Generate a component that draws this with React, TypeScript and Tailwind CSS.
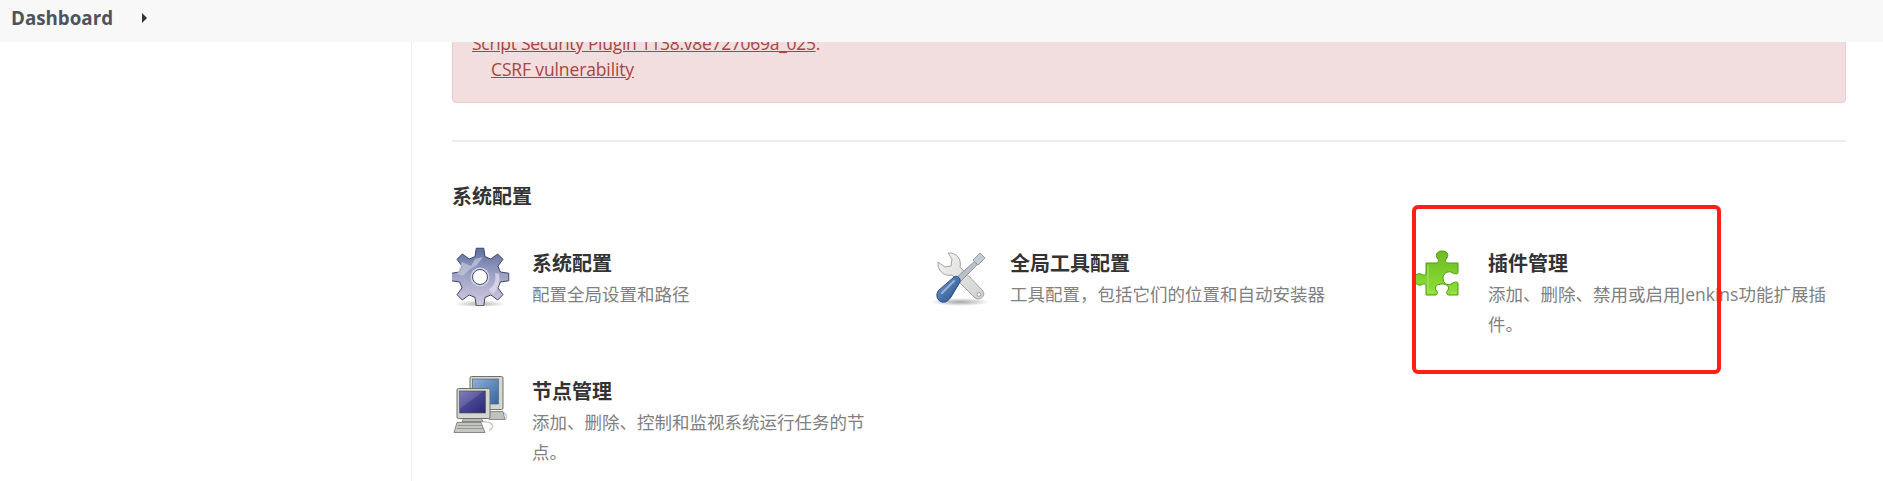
const cjk = "font-['Open_Sans','Noto_Sans_CJK_SC',sans-serif]";

// 8-tooth gear outline, tooth pointing up
function gearPath(cx: number, cy: number, outer: number, root: number) {
  const pts: string[] = [];
  for (let i = 0; i < 8; i++) {
    const a = (i * Math.PI) / 4 - Math.PI / 2;
    const at = (r: number, d: number) =>
      `${(cx + r * Math.cos(a + d)).toFixed(2)} ${(cy + r * Math.sin(a + d)).toFixed(2)}`;
    pts.push(at(root, -0.24), at(outer, -0.13), at(outer, 0.13), at(root, 0.24));
  }
  return 'M' + pts.join('L') + 'Z';
}

function GearIcon() {
  return (
    <svg viewBox="7 6 60 60" className="w-[60px] h-[60px] shrink-0">
      <defs>
        <linearGradient id="gear" x1="0" y1="0" x2="0" y2="1">
          <stop offset="0" stopColor="#5f6f9f" />
          <stop offset="0.45" stopColor="#9aa0c4" />
          <stop offset="1" stopColor="#d4cbe2" />
        </linearGradient>
        <radialGradient id="gearShadow">
          <stop offset="0" stopColor="#000" stopOpacity="0.3" />
          <stop offset="1" stopColor="#000" stopOpacity="0" />
        </radialGradient>
      </defs>
      <ellipse cx="35" cy="64" rx="26" ry="4" fill="url(#gearShadow)" />
      <path d={gearPath(35, 37, 29, 21)} fill="url(#gear)" stroke="#3f4763" strokeWidth="1" strokeLinejoin="round" />
      <path d="M12 34L17 22L26 26L30 19L38 17L32 25L24 30L18 36Z" fill="#c3c9dc" opacity="0.7" />
      <path d="M48 54A20 20 0 0 0 54 34L50 33A17 17 0 0 1 44 50Z" fill="#e4dfee" opacity="0.7" />
      <circle cx="35" cy="37" r="9.5" fill="#cfd2e2" />
      <circle cx="35" cy="37" r="7.5" fill="#fff" stroke="#454c68" strokeWidth="1" />
    </svg>
  );
}

function ToolsIcon() {
  return (
    <svg viewBox="5 6 60 60" className="w-[60px] h-[60px] shrink-0">
      <defs>
        <linearGradient id="blade" x1="0" y1="0" x2="1" y2="1">
          <stop offset="0" stopColor="#f4f4f2" />
          <stop offset="1" stopColor="#cfd1cd" />
        </linearGradient>
        <linearGradient id="handle" x1="0" y1="0" x2="1" y2="1">
          <stop offset="0" stopColor="#79a0cf" />
          <stop offset="1" stopColor="#204a87" />
        </linearGradient>
        <radialGradient id="toolShadow">
          <stop offset="0" stopColor="#000" stopOpacity="0.35" />
          <stop offset="1" stopColor="#000" stopOpacity="0" />
        </radialGradient>
      </defs>
      <ellipse cx="35" cy="62" rx="30" ry="4" fill="url(#toolShadow)" />
      {/* wrench, jaws open to the upper left */}
      <path
        d="M23 13C31 12 37 19 35 27L58 51C61 56 55 61 50 58L27 35C19 37 12 30 13 22L20 27L26 26L27 19Z"
        fill="url(#blade)"
        stroke="#a2a49f"
        strokeWidth="1"
        strokeLinejoin="round"
      />
      <circle cx="54" cy="54.5" r="1.8" fill="#fff" stroke="#8b8d88" strokeWidth="0.8" />
      {/* screwdriver */}
      <path d="M31 38L50 21L53 24L35 42Z" fill="#b9c0c8" stroke="#7f8790" strokeWidth="0.8" />
      <path d="M48 20L55 13L60 18L53 25Z" fill="#c4ccd4" stroke="#7f8790" strokeWidth="0.8" strokeLinejoin="round" />
      <path
        d="M35 42C36 38 32 35 29 37L14 50C10 54 12 61 17 62C21 63 24 60 26 57Z"
        fill="url(#handle)"
        stroke="#204a87"
        strokeWidth="1"
        strokeLinejoin="round"
      />
      <path d="M17 53L29 41" stroke="#a9c3e3" strokeWidth="2" strokeLinecap="round" opacity="0.8" />
    </svg>
  );
}

function PuzzleIcon() {
  return (
    <svg viewBox="3 6 60 60" className="w-[60px] h-[60px] shrink-0">
      <defs>
        <linearGradient id="puzzle" x1="0" y1="0" x2="0" y2="1">
          <stop offset="0" stopColor="#6dbb22" />
          <stop offset="1" stopColor="#8fe03a" />
        </linearGradient>
      </defs>
      <path
        d="M21 23L31 23C34 23 34 20 32 18C30 14 33 11 37 11C42 11 44 14 42 18C40 20 40 23 43 23L53 23L53 32C53 35 49 34 46 32C42 31 38 34 38 38C38 43 42 46 46 44C49 42 53 41 53 44L53 55L44 55C41 55 41 52 43 50C45 47 42 44 37 44C32 44 29 47 31 50C33 52 33 55 30 55L21 55L21 46C21 43 18 44 16 45C13 46 9 43 9 39C9 35 13 33 16 34C18 35 21 36 21 33Z"
        fill="url(#puzzle)"
        stroke="#4e9a06"
        strokeWidth="1"
        strokeLinejoin="round"
      />
      <path d="M23 25L23 52L29 52M46 53L51 53" fill="none" stroke="#b6ec7c" strokeWidth="1" opacity="0.8" />
    </svg>
  );
}

function Monitor({ x, y, w, h, screen }: { x: number; y: number; w: number; h: number; screen: string }) {
  return (
    <g>
      <rect x={x} y={y} width={w} height={h} rx="1.5" fill="#d3d7cf" stroke="#6e706b" strokeWidth="1" />
      <rect x={x + 2.5} y={y + 2.5} width={w - 7} height={h - 8} fill={screen} stroke="#555" strokeWidth="0.6" />
    </g>
  );
}

function ComputersIcon() {
  return (
    <svg viewBox="7 4.5 60 60" className="w-[60px] h-[60px] shrink-0">
      <defs>
        <linearGradient id="backScreen" x1="0" y1="0" x2="1" y2="1">
          <stop offset="0" stopColor="#8fb0dc" />
          <stop offset="1" stopColor="#3465a4" />
        </linearGradient>
        <linearGradient id="frontScreen" x1="0" y1="0" x2="1" y2="1">
          <stop offset="0" stopColor="#6d6bb4" />
          <stop offset="0.5" stopColor="#45438f" />
          <stop offset="1" stopColor="#2c2a75" />
        </linearGradient>
      </defs>
      {/* back computer */}
      <path d="M52 42C60 42 64 46 60 50" fill="none" stroke="#c9ccc6" strokeWidth="1.4" />
      <path d="M44 42L58 42L60 50L44 50Z" fill="#bfc2bc" stroke="#777" strokeWidth="0.8" />
      <Monitor x={25} y={7} w={33} h={33} screen="url(#backScreen)" />
      {/* front computer */}
      <path d="M36 52C46 52 52 56 44 61" fill="none" stroke="#c9ccc6" strokeWidth="1.4" />
      <path d="M19 48L36 48L38 52L17 52Z" fill="#b9bcb6" stroke="#777" strokeWidth="0.8" />
      <path d="M12 53L36 53L40 63L9 63Z" fill="#c5c8c2" stroke="#6e706b" strokeWidth="0.8" strokeLinejoin="round" />
      <path d="M13 56H37M12 59H38" stroke="#8a8c87" strokeWidth="0.8" />
      <Monitor x={12} y={19} w={33} h={30} screen="url(#frontScreen)" />
      <path d="M15 39L38 22L15 22Z" fill="#fff" opacity="0.12" />
    </svg>
  );
}

const items = [
  { title: '系统配置', desc: '配置全局设置和路径', icon: <GearIcon /> },
  { title: '全局工具配置', desc: '工具配置，包括它们的位置和自动安装器', icon: <ToolsIcon /> },
  { title: '插件管理', desc: '添加、删除、禁用或启用Jenkins功能扩展插件。', icon: <PuzzleIcon /> },
  { title: '节点管理', desc: '添加、删除、控制和监视系统运行任务的节点。', icon: <ComputersIcon /> },
];

export default function App() {
  return (
    <div className={`relative h-[481px] overflow-hidden bg-white ${cjk}`}>
      {/* breadcrumb bar */}
      <header className="relative z-10 flex h-[42px] items-center bg-[#f8f8f8] pb-[7px] pl-[11px]">
        <span className="text-[18.75px] leading-[28px] font-bold text-[#4d545d]">Dashboard</span>
        <span className="ml-[29px] h-0 w-0 border-y-[5px] border-l-[5px] border-y-transparent border-l-[#333]" />
      </header>

      <div className="flex h-[439px]">
        <aside className="w-[412px] shrink-0 border-r border-[#eeeeee]" />

        <main className="min-w-0 flex-1 pl-[40px] pr-[37px]">
          {/* warning, scrolled partly under the bar */}
          <div className="-mt-[31px] rounded-[4px] border border-[#ebccd1] bg-[#f2dede] px-[19px] pt-[18px] pb-[20px] text-[17.5px] leading-[26px] text-[#a94442]">
            <div className="tracking-[-0.3px]">
              <a className="underline">Script Security Plugin 1138.v8e727069a_025</a>:
            </div>
            <div className="pl-[19px] tracking-[-0.13px]">
              <a className="underline">CSRF vulnerability</a>
            </div>
          </div>

          <div className="mt-[37px] h-[2px] bg-[#e9eef2]" />

          <h2 className="mt-[41px] mb-[35px] text-[20px] leading-[28px] font-bold text-[#333]">系统配置</h2>

          <div className="grid grid-cols-3 gap-x-[40px] gap-y-[35px]">
            {items.map((item) => (
              <div key={item.title} className="flex gap-[20px]">
                {item.icon}
                <div className="min-w-0 flex-1 pt-[4px]">
                  <div className="text-[20px] leading-[28px] font-bold text-[#333]">{item.title}</div>
                  <div className="mt-[1px] text-[17.5px] leading-[30px] text-[#808080]">{item.desc}</div>
                </div>
              </div>
            ))}
          </div>
        </main>
      </div>

      {/* red annotation box drawn over the screenshot */}
      <div className="absolute left-[1412px] top-[205px] h-[169px] w-[309px] rounded-[6px] border-[4px] border-[#ff2015]" />
    </div>
  );
}
